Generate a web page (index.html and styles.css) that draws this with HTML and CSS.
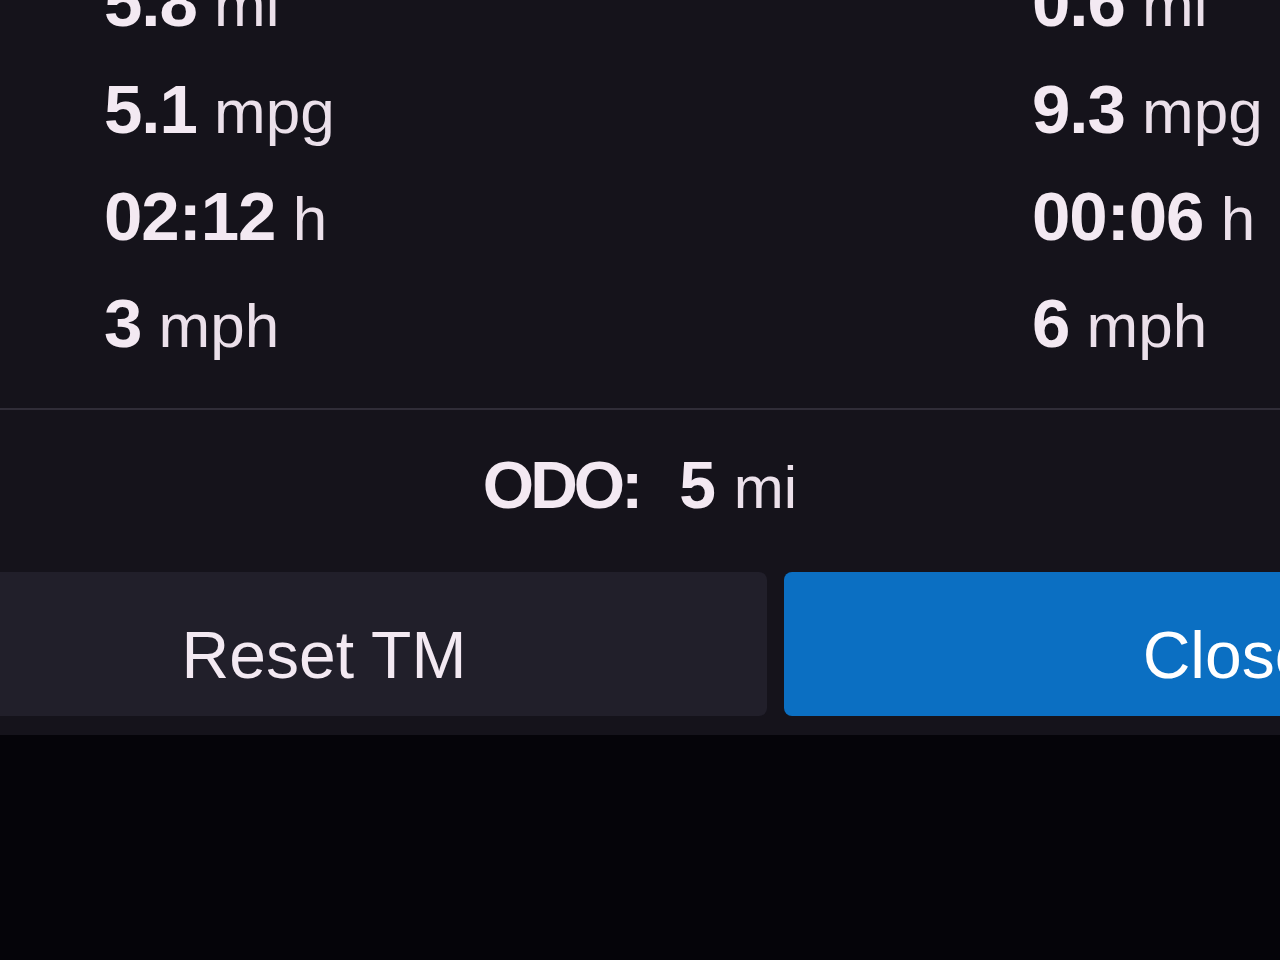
FILE: index.html
```html
<!DOCTYPE html>
<html lang="en">
<head>
  <meta charset="UTF-8">
  <title>Trip computer</title>
  <link rel="stylesheet" href="styles.css">
</head>
<body>

<div class="panel">
  <section class="trips">
    <div class="trip-list">
      <div class="trip">
        <div class="value"><b>5.8</b> <span>mi</span></div>
        <div class="value"><b>5.1</b> <span>mpg</span></div>
        <div class="value"><b>02:12</b> <span>h</span></div>
        <div class="value"><b>3</b> <span>mph</span></div>
      </div>
      <div class="trip">
        <div class="value"><b>0.6</b> <span>mi</span></div>
        <div class="value"><b>9.3</b> <span>mpg</span></div>
        <div class="value"><b>00:06</b> <span>h</span></div>
        <div class="value"><b>6</b> <span>mph</span></div>
      </div>
    </div>
  </section>

  <div class="odo">
    <b class="odo-label">ODO:</b><b class="odo-num">5</b><span class="odo-unit">mi</span>
  </div>

  <div class="actions">
    <button class="btn">Reset TM</button>
    <button class="btn btn-primary">Close</button>
  </div>
</div>

</body>
</html>
```

FILE: styles.css
```css
body {
  margin: 0;
  background-color: #050409;
  font-family: 'Liberation Sans', Arial, sans-serif;
  color: #f3e9f2;
  overflow: hidden;
  width: 1280px;
  height: 960px;
}
.panel {
  background-color: #15131b;
  padding-bottom: 19px;
  overflow: hidden;
}
.trips {
  height: 408px;
  overflow: hidden;
  border-bottom: 2px solid #302d38;
}
.trip-list {
  display: grid;
  grid-template-columns: 928px 1fr;
  margin-top: -51px;
  padding-left: 104px;
}
.value {
  font-size: 69px;
  line-height: 107px;
  white-space: nowrap;
  word-spacing: -2px;
}
.value b {
  font-weight: 700;
  letter-spacing: -1px;
}
.value span {
  font-size: 62px;
  line-height: 1;
  color: #ebe0ea;
}
.odo {
  height: 162px;
  line-height: 150px;
  text-align: center;
  white-space: nowrap;
  box-sizing: border-box;
  padding-bottom: 12px;
  font-size: 66px;
}
.odo-label {
  letter-spacing: -4px;
  margin-right: 40px;
}
.odo-num {
  margin-right: 18px;
}
.odo-unit {
  font-size: 60px;
  line-height: 1;
  color: #ebe0ea;
}
.actions {
  display: flex;
  gap: 17px;
  width: 1789px;
  margin-left: -119px;
}
.btn {
  flex: 1;
  height: 144px;
  padding: 22px 0 0;
  line-height: 122px;
  border: none;
  border-radius: 8px;
  background-color: #211f2a;
  color: #f3e9f2;
  font-family: 'Liberation Sans', Arial, sans-serif;
  font-size: 66px;
  text-align: center;
}
.btn-primary {
  background-color: #0b6fc2;
  color: #ffffff;
}
```
